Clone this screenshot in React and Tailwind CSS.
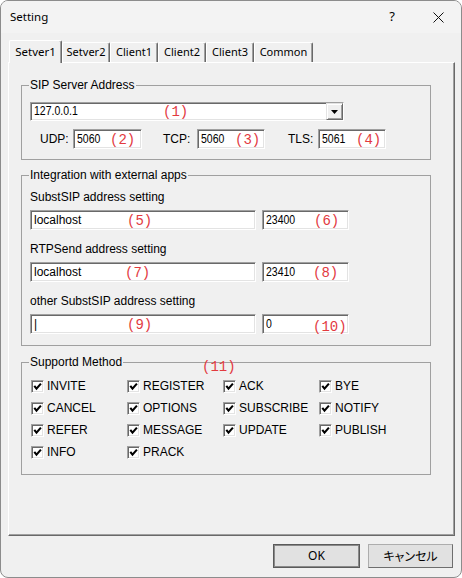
import React from "react";

const ui = "font-['Liberation_Sans',Arial,sans-serif]";
const num = "font-['Liberation_Sans',Arial,sans-serif] text-[12.5px] origin-left scale-x-[0.84]";
const note = "font-['Liberation_Mono',monospace] text-[14px] text-[#e23a3f]";
const sunken =
  "bg-white border border-t-[#a0a0a0] border-l-[#a0a0a0] border-b-white border-r-white shadow-[inset_1px_1px_0_#696969,inset_-1px_-1px_0_#e3e3e3]";

const Field = ({ w, value, mark, markPos, narrow }) => (
  <div className={`relative h-[20px] ${w} ${sunken}`}>
    <span
      className={`absolute left-[3px] top-[1px] leading-[16px] text-black ${
        narrow ? num : `${ui} text-[12px]`
      }`}
    >
      {value}
    </span>
    {mark && (
      <span className={`absolute top-[1px] leading-[19px] ${note} ${markPos}`}>
        {mark}
      </span>
    )}
  </div>
);

const Check = ({ label }) => (
  <div className="flex items-center h-[22px]">
    <div className={`w-[13px] h-[13px] flex items-center justify-center ${sunken}`}>
      <svg width="9" height="9" viewBox="0 0 9 9">
        <path d="M1.3 3.8 L3.5 6.6 L7.9 1.6" fill="none" stroke="#000" strokeWidth="2.1" />
      </svg>
    </div>
    <span className={`ml-[3px] text-[12px] text-black ${ui}`}>{label}</span>
  </div>
);

const methods = [
  "INVITE", "REGISTER", "ACK", "BYE",
  "CANCEL", "OPTIONS", "SUBSCRIBE", "NOTIFY",
  "REFER", "MESSAGE", "UPDATE", "PUBLISH",
  "INFO", "PRACK",
];

const tabs = [
  { name: "Setver2", w: "w-[48px]" },
  { name: "Client1", w: "w-[48px]" },
  { name: "Client2", w: "w-[48px]" },
  { name: "Client3", w: "w-[48px]" },
  { name: "Common", w: "w-[59px]" },
];

export default function App() {
  return (
    <div className="w-[462px] h-[578px] bg-white">
      <div className="w-full h-full rounded-[8px] border border-[#8c8c8c] bg-[#f0f0f0] flex flex-col overflow-hidden">
        {/* Title bar */}
        <div className="h-[32px] flex items-center bg-[#f3f3f3]">
          <span className="pl-[9px] text-[11.5px] text-black font-['Noto_Sans',sans-serif]">
            Setting
          </span>
          <div className="ml-auto flex h-full">
            <div className="w-[46px] flex items-center justify-center text-[13px] text-black font-['Noto_Sans',sans-serif]">
              ?
            </div>
            <div className="w-[46px] flex items-center justify-center">
              <svg width="11" height="11" viewBox="0 0 11 11">
                <path d="M0.5 0.5 L10.5 10.5 M10.5 0.5 L0.5 10.5" stroke="#111" strokeWidth="1" />
              </svg>
            </div>
          </div>
        </div>

        {/* Tabs */}
        <div className="mt-[7px] h-[22px] pl-[8px] flex items-end font-['Noto_Sans',sans-serif] text-[11px] text-black">
          <div className="relative z-10 w-[53px] h-[23px] -mb-[1px] bg-[#f0f0f0] border-l border-t border-white border-r border-r-[#696969] rounded-t-[2px] shadow-[inset_-1px_0_0_#a0a0a0] flex justify-center pt-[2px] text-[11.5px]">
            Setver1
          </div>
          {tabs.map((t) => (
            <div
              key={t.name}
              className={`${t.w} h-[20px] bg-[#f0f0f0] border-l border-t border-white border-r border-r-[#696969] rounded-t-[2px] shadow-[inset_-1px_0_0_#a0a0a0] flex justify-center pt-[1px]`}
            >
              {t.name}
            </div>
          ))}
        </div>

        {/* Panel */}
        <div className={`ml-[7px] w-[447px] h-[474px] border border-t-white border-l-white border-r-[#696969] border-b-[#696969] shadow-[inset_-1px_-1px_0_#a0a0a0] pt-[15px] pl-[12px] text-[12px] text-black ${ui}`}>
          {/* SIP Server Address */}
          <fieldset className="w-[410px] border border-[#a0a0a0]">
            <legend className="ml-[7px] px-[1px] leading-[14px]">SIP Server Address</legend>
            <div className="px-[8px] pb-[10px]">
              <div className={`relative mt-[10px] w-[314px] h-[19px] ${sunken}`}>
                <span className={`absolute left-[3px] top-[1px] leading-[15px] ${num}`}>
                  127.0.0.1
                </span>
                <span className={`absolute left-[132px] top-0 leading-[18px] ${note}`}>(1)</span>
                <div className="absolute right-0 top-0 w-[17px] h-[17px] bg-[#f0f0f0] border border-t-[#e3e3e3] border-l-[#e3e3e3] border-r-[#696969] border-b-[#696969] shadow-[inset_1px_1px_0_#fff,inset_-1px_-1px_0_#a0a0a0] flex items-center justify-center">
                  <svg width="7" height="4" viewBox="0 0 7 4">
                    <path d="M0 0 H7 L3.5 4 Z" fill="#000" />
                  </svg>
                </div>
              </div>
              <div className="mt-[8px] flex items-center pl-[10px]">
                <span className="w-[33px]">UDP:</span>
                <Field w="w-[69px]" value="5060" mark="(2)" markPos="left-[36px]" narrow />
                <span className="ml-[21px] w-[34px]">TCP:</span>
                <Field w="w-[68px]" value="5060" mark="(3)" markPos="left-[37px]" narrow />
                <span className="ml-[23px] w-[30px]">TLS:</span>
                <Field w="w-[68px]" value="5061" mark="(4)" markPos="left-[37px]" narrow />
              </div>
            </div>
          </fieldset>

          {/* Integration with external apps */}
          <fieldset className="mt-[8px] w-[410px] border border-[#a0a0a0]">
            <legend className="ml-[7px] px-[1px] leading-[14px]">Integration with external apps</legend>
            <div className="px-[8px] pb-[11px]">
              <div className="mt-[8px] leading-[14px]">SubstSIP address setting</div>
              <div className="mt-[6px] flex gap-[6px]">
                <Field w="w-[226px]" value="localhost" mark="(5)" markPos="left-[96px]" />
                <Field w="w-[87px]" value="23400" mark="(6)" markPos="left-[51px]" narrow />
              </div>
              <div className="mt-[12px] leading-[14px]">RTPSend address setting</div>
              <div className="mt-[6px] flex gap-[6px]">
                <Field w="w-[226px]" value="localhost" mark="(7)" markPos="left-[94px]" />
                <Field w="w-[87px]" value="23410" mark="(8)" markPos="left-[50px]" narrow />
              </div>
              <div className="mt-[12px] leading-[14px]">other SubstSIP address setting</div>
              <div className="mt-[6px] flex gap-[6px]">
                <Field w="w-[226px]" value="|" mark="(9)" markPos="left-[96px]" />
                <Field w="w-[87px]" value="0" mark="(10)" markPos="left-[50px] top-[3px]" narrow />
              </div>
            </div>
          </fieldset>

          {/* Supportd Method */}
          <fieldset className="mt-[9px] w-[410px] border border-[#a0a0a0]">
            <legend className="ml-[7px] px-[1px] leading-[14px]">Supportd Method</legend>
            <div className="relative mt-[6px] pl-[9px] pb-[11px] grid grid-cols-[96px_96px_96px_96px]">
              <span className={`absolute left-[180px] top-[-15px] leading-[14px] ${note}`}>(11)</span>
              {methods.map((m) => (
                <Check key={m} label={m} />
              ))}
            </div>
          </fieldset>
        </div>

        {/* Buttons */}
        <div className="mt-[8px] flex justify-end pr-[8px] gap-[8px] text-[12px] text-black font-['Noto_Sans','Noto_Sans_CJK_JP',sans-serif]">
          <button className="w-[87px] h-[24px] bg-[#e1e1e1] border border-[#5a5a5a] shadow-[inset_0_0_0_1px_#8a8a8a]">
            OK
          </button>
          <button className="w-[85px] h-[24px] bg-[#e1e1e1] border border-[#adadad] border-r-[#6e6e6e] border-b-[#6e6e6e] [font-feature-settings:'palt'] font-['Noto_Sans_CJK_JP',sans-serif]">
            キャンセル
          </button>
        </div>
      </div>
    </div>
  );
}
